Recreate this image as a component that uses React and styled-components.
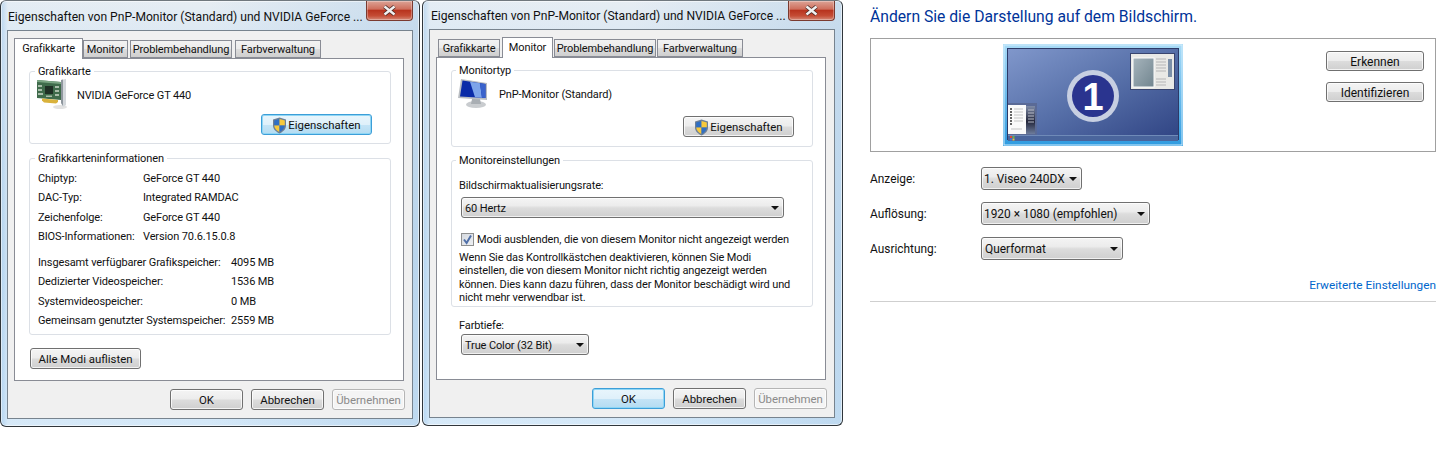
import React from "react";
import styled, { createGlobalStyle } from "styled-components";

const Global = createGlobalStyle`
  html, body { margin: 0; padding: 0; background: #fff; }
  body { font-family: Roboto, "Open Sans", sans-serif; font-size: 11px; letter-spacing: -0.12px; color: #111; }
  * { box-sizing: border-box; }
`;

const Page = styled.div`
  display: flex;
  align-items: flex-start;
  width: 1446px;
  height: 449px;
  overflow: hidden;
  background: #fff;
`;

const Win = styled.div`
  width: ${p => p.$w}px;
  height: ${p => p.$h}px;
  margin-left: ${p => p.$ml || 0}px;
  flex: none;
  display: flex;
  flex-direction: column;
  padding: 0 ${p => p.$pr}px 7px 6px;
  border: 1px solid #30363b;
  border-top-color: #70787e;
  border-radius: 6px;
  background:
    linear-gradient(90deg, rgba(150,195,235,.5) 0, rgba(225,238,248,.2) 7px, rgba(225,238,248,0) 50%, rgba(150,190,225,.35) 100%),
    linear-gradient(180deg, #e6edf3 0, #dee9f3 30px, #cde2f3 60%, #d4e8f8 100%);
  box-shadow: inset 0 0 0 1px rgba(255,255,255,.55);
`;

const TitleBar = styled.div`
  height: ${p => p.$h}px;
  flex: none;
  display: flex;
  justify-content: space-between;
  align-items: flex-start;
`;

const Title = styled.div`
  margin: ${p => p.$top}px 0 0 ${p => p.$left}px;
  font-size: 12.1px;
  letter-spacing: 0;
  line-height: 16px;
  white-space: nowrap;
  color: #111;
`;

const CloseBtn = styled.div`
  width: 47px;
  height: 20px;
  flex: none;
  border: 1px solid #7a3a30;
  border-top: none;
  border-radius: 0 0 4px 4px;
  display: flex;
  align-items: center;
  justify-content: center;
  background: linear-gradient(180deg, #dca396 0, #cf6f5d 42%, #b8341f 50%, #c54c35 78%, #d58a78 100%);
  box-shadow: inset 0 0 0 1px rgba(255,255,255,.3);
`;

const Client = styled.div`
  flex: 1;
  display: flex;
  flex-direction: column;
  background: #f0f0f0;
  border: 1px solid #77838e;
  padding: 7px 8px 0 6px;
`;

const TabRow = styled.div`
  display: flex;
  align-items: flex-end;
  height: 20px;
  flex: none;
`;

const Tab = styled.div`
  width: ${p => p.$w}px;
  margin-left: ${p => p.$ml}px;
  height: ${p => (p.$active ? 21 : 18)}px;
  margin-bottom: ${p => (p.$active ? -1 : 0)}px;
  position: relative;
  z-index: ${p => (p.$active ? 1 : 0)};
  display: flex;
  align-items: center;
  justify-content: center;
  padding: ${p => (p.$active ? "0 0 2px" : "1px 0 0")};
  white-space: nowrap;
  border: 1px solid #898c95;
  border-bottom: ${p => (p.$active ? "none" : "1px solid #898c95")};
  background: ${p => (p.$active ? "#fff" : "linear-gradient(180deg,#f2f2f2 0,#ebebeb 50%,#dddddd 51%,#cfcfcf 100%)")};
`;

const TabPanel = styled.div`
  flex: none;
  height: 323px;
  background: #fff;
  border: 1px solid #898c95;
  padding: 5px 12px 0 14px;
  display: flex;
  flex-direction: column;
`;

const Group = styled.fieldset`
  margin: ${p => p.$mt || 0}px 0 0 0;
  min-width: 0;
  padding: 0 8px ${p => p.$pb || 0}px ${p => p.$pl || 8}px;
  border: 1px solid #dce0e6;
  border-radius: 3px;
  display: flex;
  flex-direction: column;
`;

const Legend = styled.legend`
  padding: 1px 3px 0;
  margin-left: -3px;
  margin-bottom: -1px;
  line-height: 14px;
`;

const DeviceRow = styled.div`
  display: flex;
  align-items: center;
  height: 31px;
  margin: 1px 0 0 ${p => p.$ml}px;
  gap: 9px;
`;

const DeviceName = styled.span`
  margin-top: 2px;
`;

const Btn = styled.div`
  width: ${p => p.$w || 73}px;
  height: ${p => p.$h || 21}px;
  flex: none;
  margin: ${p => p.$margin || 0};
  padding-top: 1px;
  border-radius: 3px;
  border: 1px solid ${p => (p.$focus ? "#3c9ed8" : p.$off ? "#b5b5b5" : "#707070")};
  color: ${p => (p.$off ? "#8a8a8a" : "#111")};
  font-size: ${p => p.$fs || 11.4}px;
  letter-spacing: 0;
  display: flex;
  align-items: center;
  justify-content: center;
  gap: 1px;
  white-space: nowrap;
  background: ${p =>
    p.$focus
      ? "linear-gradient(180deg,#e8f5fc 0,#dff0fa 50%,#c5e4f6 51%,#b4dcf2 100%)"
      : p.$off
      ? "#f4f4f4"
      : "linear-gradient(180deg,#f4f4f4 0,#ececec 48%,#dcdcdc 52%,#cfcfcf 100%)"};
  box-shadow: inset 0 0 0 1px ${p => (p.$focus ? "#8fd6f5" : "rgba(255,255,255,.75)")};
`;

const Select = styled.div`
  width: ${p => p.$w}px;
  height: ${p => p.$h || 21}px;
  flex: none;
  margin: ${p => p.$margin || 0};
  padding: 1px 4px 0 ${p => p.$pl || 3}px;
  border: 1px solid #707070;
  border-radius: 3px;
  display: flex;
  align-items: center;
  justify-content: space-between;
  white-space: nowrap;
  background: linear-gradient(180deg,#f4f4f4 0,#ececec 40%,#dcdcdc 52%,#cfcfcf 100%);
  box-shadow: inset 0 0 0 1px rgba(255,255,255,.7);
  &::after {
    content: "";
    width: 0;
    height: 0;
    border-left: 4px solid transparent;
    border-right: 4px solid transparent;
    border-top: 4px solid #111;
  }
`;

const InfoGrid = styled.div`
  display: grid;
  grid-template-columns: ${p => p.$col}px 1fr;
  grid-auto-rows: 19.5px;
  align-items: center;
  margin-top: ${p => p.$mt}px;
  white-space: nowrap;
`;

const Footer = styled.div`
  display: flex;
  justify-content: flex-end;
  gap: 8px;
  margin: 8px -1px 0 0;
`;

const Label = styled.div`
  line-height: 14px;
  margin: ${p => p.$mt || 0}px 0 0 ${p => p.$ml || 0}px;
`;

const CheckRow = styled.div`
  display: flex;
  align-items: center;
  gap: 3px;
  margin: 14px 0 0 2px;
  height: 14px;
  white-space: nowrap;
`;

const CheckBox = styled.div`
  width: 13px;
  height: 13px;
  border: 1px solid #8e8f8f;
  background: linear-gradient(135deg,#d5d9df,#eef0f3);
  display: flex;
  align-items: center;
  justify-content: center;
`;

const Para = styled.p`
  margin: 5px 0 0 0;
  line-height: 13.3px;
  white-space: nowrap;
`;

const Side = styled.div`
  width: 566px;
  margin-left: 27px;
  flex: none;
  display: flex;
  flex-direction: column;
  font-size: 11.9px;
  letter-spacing: 0;
`;

const Heading = styled.h1`
  margin: 7px 0 0 0;
  height: 24px;
  font-size: 15.7px;
  line-height: 20px;
  font-weight: 400;
  color: #003399;
  white-space: nowrap;
`;

const DisplayBox = styled.div`
  margin-top: 7px;
  height: 114px;
  border: 1px solid #a0a0a0;
  padding: 5px 11px 0 132px;
  display: flex;
  justify-content: space-between;
  align-items: flex-start;
`;

const SideBtns = styled.div`
  display: flex;
  flex-direction: column;
  gap: 11px;
  margin-top: 7px;
`;

const FormRow = styled.div`
  display: grid;
  grid-template-columns: 111px auto;
  justify-content: start;
  align-items: center;
  margin-top: ${p => p.$mt}px;
`;

const LinkRow = styled.div`
  margin-top: 17px;
  text-align: right;
  color: #0066cc;
  font-size: 11.8px;
  line-height: 16px;
`;

const Rule = styled.div`
  margin-top: 8px;
  height: 1px;
  background: #cfcfcf;
`;

const Shield = () => (
  <svg width="15" height="17" viewBox="0 0 15 17">
    <path d="M7.5 .5 L14 2.5 V8.5 C14 12.5 10.5 15 7.5 16.5 C4.5 15 1 12.5 1 8.5 V2.5 Z" fill="#6d7f95" />
    <path d="M7.5 2 V8.5 H2.2 V3.5 Z" fill="#2f6fc4" />
    <path d="M7.5 2 L12.8 3.5 V8.5 H7.5 Z" fill="#f7c93c" />
    <path d="M2.2 8.5 H7.5 V15 C5 13.8 2.5 11.8 2.2 8.5 Z" fill="#f7c93c" />
    <path d="M7.5 8.5 H12.8 C12.5 11.8 10 13.8 7.5 15 Z" fill="#2f6fc4" />
  </svg>
);

const GpuIcon = () => (
  <svg width="32" height="31" viewBox="0 0 32 31">
    <ellipse cx="24" cy="28" rx="7" ry="2" fill="#e2e2e2" />
    <path d="M1 1 L25 3 V21 L1 19 Z" fill="#3f6b4b" />
    <path d="M1 1 L25 3 V5 L1 3 Z" fill="#7aa583" />
    <rect x="9" y="7" width="8" height="8" fill="#1f2f25" />
    <path d="M2 6 h4 v2 h-4z M2 10 h4 v2 h-4z M2 14 h5 v2 h-5z M19 7 h4 v2 h-4z M19 11 h4 v2 h-4z M19 15 h4 v2 h-4z M10 16.5 h6 v1.5 h-6z" fill="#a9bdaa" />
    <path d="M6 19.4 L22 21 V23 L20 24.5 L8 23.5 L6 21.5 Z" fill="#d9b23c" />
    <path d="M25 1 L30 0 V26 L27 28 L25 24 Z" fill="#d4d8dc" />
    <path d="M25 1 L27 .6 V27 L25 24 Z" fill="#8f979e" />
  </svg>
);

const MonitorIcon = () => (
  <svg width="32" height="31" viewBox="0 0 32 31">
    <ellipse cx="18" cy="26.5" rx="10" ry="3.6" fill="#c9cccf" />
    <path d="M14 21 H22 L23 26 H13 Z" fill="#a9aeb3" />
    <path d="M3 1 L29 5 V22 L0 20 Z" fill="#b9bdc2" />
    <path d="M4.5 2.5 L27.5 6 V20 L2 18.5 Z" fill="#0a2ba8" />
    <path d="M12 3.7 L22 5.2 L24 19.8 L17 19.3 Z" fill="#7da4ea" />
    <path d="M22 5.2 L27.5 6 V20 L24 19.8 Z" fill="#3a63cc" />
  </svg>
);

const Preview = () => (
  <svg width="180" height="102" viewBox="0 0 180 102">
    <defs>
      <linearGradient id="frm" x1="0" y1="0" x2="0" y2="1">
        <stop offset="0" stopColor="#a9dbf7" />
        <stop offset="1" stopColor="#2f9be0" />
      </linearGradient>
      <linearGradient id="dsk" x1="0" y1="0" x2="1" y2="1">
        <stop offset="0" stopColor="#8097cb" />
        <stop offset=".5" stopColor="#566fa8" />
        <stop offset="1" stopColor="#2f4383" />
      </linearGradient>
      <linearGradient id="pane" x1="0" y1="0" x2="1" y2="1">
        <stop offset="0" stopColor="#a6b4bc" />
        <stop offset="1" stopColor="#71858f" />
      </linearGradient>
      <linearGradient id="gadg" x1="0" y1="0" x2="0" y2="1">
        <stop offset="0" stopColor="#7f8ca8" />
        <stop offset=".55" stopColor="#23263a" />
        <stop offset="1" stopColor="#6d7c9c" />
      </linearGradient>
    </defs>
    <rect width="180" height="102" fill="url(#frm)" />
    <rect x="1" y="1" width="178" height="100" fill="none" stroke="#d3eefc" strokeWidth="1" />
    <rect x="4" y="4" width="172" height="92" fill="#2c3a68" />
    <rect x="5" y="5" width="170" height="91" fill="url(#dsk)" />
    <rect x="5" y="91" width="170" height="6" fill="#4a659c" />
    <rect x="5" y="91" width="170" height="1" fill="#6f8ab8" />
    <rect x="127" y="9" width="45" height="37" fill="#39456f" />
    <rect x="128" y="10" width="43" height="35" fill="#e9e9e6" />
    <rect x="130" y="14" width="21" height="29" fill="url(#pane)" stroke="#fbfbfb" />
    <path d="M153 15 h10 M153 18 h10 M153 21 h10 M153 24 h10 M153 27 h10 M153 35 h10 M153 38 h10 M153 41 h10" stroke="#b5b5b5" strokeWidth="1.2" />
    <rect x="165" y="15" width="4" height="18" fill="#7b8fa8" />
    <rect x="5" y="59" width="29" height="32" fill="#5a6a96" />
    <rect x="5" y="61" width="18" height="29" fill="#fafafa" />
    <rect x="23" y="62" width="9" height="28" fill="url(#gadg)" />
    <path d="M7 65 h2 M7 68 h2 M7 71 h2 M7 74 h2 M7 77 h2 M7 80 h2" stroke="#333" strokeWidth="1.6" />
    <path d="M11 65 h9 M11 68 h9 M11 71 h9 M11 74 h9 M11 77 h9 M8 85 h11" stroke="#c4c4c4" strokeWidth="1" />
    <path d="M25 66 h6 M25 69 h6 M25 72 h6 M25 75 h6 M25 78 h6" stroke="#b8bcc8" strokeWidth="1" />
    <rect x="7" y="92" width="2" height="2" fill="#d8473a" />
    <rect x="9.5" y="92" width="2" height="2" fill="#6bb34a" />
    <rect x="7" y="94.5" width="2" height="2" fill="#3f78d8" />
    <rect x="9.5" y="94.5" width="2" height="2" fill="#eec53b" />
    <circle cx="90" cy="52" r="26" fill="#c7cfe2" />
    <circle cx="90" cy="52" r="21" fill="#2a348f" />
    <text x="90" y="66" textAnchor="middle" fontFamily="Liberation Sans, sans-serif" fontWeight="700" fontSize="38" fill="#fff">1</text>
  </svg>
);

const Dialog = ({ w, h, ml, pr, titleH, titleTop, titleLeft, tabs, children, focusOk }) => (
  <Win $w={w} $h={h} $ml={ml} $pr={pr}>
    <TitleBar $h={titleH}>
      <Title $top={titleTop} $left={titleLeft}>Eigenschaften von PnP-Monitor (Standard) und NVIDIA GeForce ...</Title>
      <CloseBtn>
        <svg width="15" height="11" viewBox="0 0 15 11">
          <path d="M2.5 1.5 L12.5 9.5 M12.5 1.5 L2.5 9.5" stroke="#4a2a26" strokeWidth="4" />
          <path d="M2.5 1.5 L12.5 9.5 M12.5 1.5 L2.5 9.5" stroke="#f2f2f2" strokeWidth="2.4" />
        </svg>
      </CloseBtn>
    </TitleBar>
    <Client>
      <TabRow>
        {tabs.map(t => (
          <Tab key={t.label} $w={t.w} $ml={t.ml} $active={t.active}>{t.label}</Tab>
        ))}
      </TabRow>
      <TabPanel>{children}</TabPanel>
      <Footer>
        <Btn $focus={focusOk}>OK</Btn>
        <Btn>Abbrechen</Btn>
        <Btn $off>Übernehmen</Btn>
      </Footer>
    </Client>
  </Win>
);

const adapterRows = [
  ["Chiptyp:", "GeForce GT 440"],
  ["DAC-Typ:", "Integrated RAMDAC"],
  ["Zeichenfolge:", "GeForce GT 440"],
  ["BIOS-Informationen:", "Version 70.6.15.0.8"],
];
const memRows = [
  ["Insgesamt verfügbarer Grafikspeicher:", "4095 MB"],
  ["Dedizierter Videospeicher:", "1536 MB"],
  ["Systemvideospeicher:", "0 MB"],
  ["Gemeinsam genutzter Systemspeicher:", "2559 MB"],
];

const tabs1 = [
  { label: "Grafikkarte", w: 69, ml: 0, active: true },
  { label: "Monitor", w: 45, ml: 0 },
  { label: "Problembehandlung", w: 102, ml: 2 },
  { label: "Farbverwaltung", w: 86, ml: 3 },
];
const tabs2 = [
  { label: "Grafikkarte", w: 62, ml: 2 },
  { label: "Monitor", w: 51, ml: 2, active: true },
  { label: "Problembehandlung", w: 102, ml: 1 },
  { label: "Farbverwaltung", w: 86, ml: 1 },
];

export default function App() {
  return (
    <Page>
      <Global />
      <Dialog w={420} h={427} pr={6} titleH={29} titleTop={8} titleLeft={1} tabs={tabs1}>
        <Group $pb={8}>
          <Legend>Grafikkarte</Legend>
          <DeviceRow $ml={-2}><GpuIcon /><DeviceName>NVIDIA GeForce GT 440</DeviceName></DeviceRow>
          <Btn $focus $w={111} $margin="4px 0 0 223px"><Shield />Eigenschaften</Btn>
        </Group>
        <Group $mt={7} $pb={3}>
          <Legend>Grafikkarteninformationen</Legend>
          <InfoGrid $col={105} $mt={3.5}>
            {adapterRows.map(([k, v]) => (
              <React.Fragment key={k}><span>{k}</span><span>{v}</span></React.Fragment>
            ))}
          </InfoGrid>
          <InfoGrid $col={193} $mt={6}>
            {memRows.map(([k, v]) => (
              <React.Fragment key={k}><span>{k}</span><span>{v}</span></React.Fragment>
            ))}
          </InfoGrid>
        </Group>
        <Btn $w={111} $margin="13px 0 0 1px">Alle Modi auflisten</Btn>
      </Dialog>

      <Dialog w={421} h={426} ml={2} pr={7} titleH={28} titleTop={7} titleLeft={2} tabs={tabs2} focusOk>
        <Group $pb={9} $pl={7}>
          <Legend>Monitortyp</Legend>
          <DeviceRow $ml={-1}><MonitorIcon /><DeviceName>PnP-Monitor (Standard)</DeviceName></DeviceRow>
          <Btn $w={111} $margin="7px 0 0 224px"><Shield />Eigenschaften</Btn>
        </Group>
        <Group $mt={6} $pb={2} $pl={7}>
          <Legend>Monitoreinstellungen</Legend>
          <Label $mt={12}>Bildschirmaktualisierungsrate:</Label>
          <Select $w={323} $margin="4px 0 0 2px">60 Hertz</Select>
          <CheckRow>
            <CheckBox>
              <svg width="11" height="11" viewBox="0 0 11 11">
                <path d="M2 5.5 L4.6 9 L9 1.5" fill="none" stroke="#4f6fa8" strokeWidth="2" />
              </svg>
            </CheckBox>
            Modi ausblenden, die von diesem Monitor nicht angezeigt werden
          </CheckRow>
          <Para>
            Wenn Sie das Kontrollkästchen deaktivieren, können Sie Modi<br />
            einstellen, die von diesem Monitor nicht richtig angezeigt werden<br />
            können. Dies kann dazu führen, dass der Monitor beschädigt wird und<br />
            nicht mehr verwendbar ist.
          </Para>
        </Group>
        <Label $mt={12} $ml={8}>Farbtiefe:</Label>
        <Select $w={128} $margin="1px 0 0 10px">True Color (32 Bit)</Select>
      </Dialog>

      <Side>
        <Heading>Ändern Sie die Darstellung auf dem Bildschirm.</Heading>
        <DisplayBox>
          <Preview />
          <SideBtns>
            <Btn $w={98} $h={20} $fs={12}>Erkennen</Btn>
            <Btn $w={98} $h={20} $fs={12}>Identifizieren</Btn>
          </SideBtns>
        </DisplayBox>
        <FormRow $mt={15}><span>Anzeige:</span><Select $w={101} $h={23} $pl={2}>1. Viseo 240DX</Select></FormRow>
        <FormRow $mt={12}><span>Auflösung:</span><Select $w={169} $h={23} $pl={2}>1920 × 1080 (empfohlen)</Select></FormRow>
        <FormRow $mt={12}><span>Ausrichtung:</span><Select $w={142} $h={23} $pl={3}>Querformat</Select></FormRow>
        <LinkRow>Erweiterte Einstellungen</LinkRow>
        <Rule />
      </Side>
    </Page>
  );
}
